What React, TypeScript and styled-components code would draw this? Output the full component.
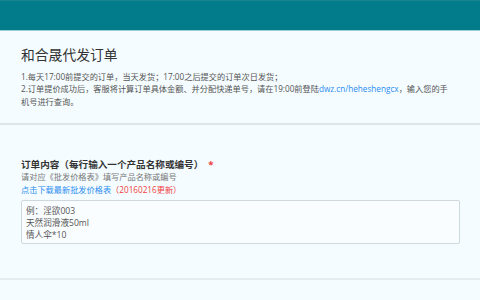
import styled, { createGlobalStyle } from "styled-components";

const GlobalStyle = createGlobalStyle`
  html, body {
    margin: 0;
    padding: 0;
    background: #f4fcff;
  }
  body {
    font-family: "Open Sans", "Noto Sans CJK SC", sans-serif;
    color: #555;
    text-spacing-trim: space-all;
  }
`;

export default function App() {
  return (
    <Page>
      <GlobalStyle />
      <TopBar />
      <Section>
        <Title>和合晟代发订单</Title>
        <Notes>
          <NoteLine>1.每天17:00前提交的订单，当天发货；17:00之后提交的订单次日发货；</NoteLine>
          <NoteLine>
            2.订单提价成功后，客服将计算订单具体金额、并分配快递单号，请在19:00前登陆
            <Link href="#">dwz.cn/heheshengcx</Link>，输入您的手
          </NoteLine>
          <NoteLine>机号进行查询。</NoteLine>
        </Notes>
      </Section>
      <Section $form>
        <Label>
          订单内容（每行输入一个产品名称或编号）<Required>*</Required>
        </Label>
        <Hint>请对应《批发价格表》填写产品名称或编号</Hint>
        <DownloadRow>
          <Link href="#">点击下载最新批发价格表</Link>
          <Updated>（20160216更新）</Updated>
        </DownloadRow>
        <OrderBox placeholder={"例：淫欲003\n天然润滑液50ml\n情人伞*10"} />
      </Section>
    </Page>
  );
}

const Page = styled.div`
  width: 480px;
  min-height: 300px;
  background: #f4fcff;
`;

const TopBar = styled.header`
  box-sizing: border-box;
  height: 31px;
  background: #027b8a;
  border-top: 1px solid #19858f;
  border-bottom: 1px solid #9ccdd3;
`;

const Section = styled.section<{ $form?: boolean }>`
  padding: ${(p) => (p.$form ? "34px 20px 34px 21px" : "14px 20px 15px 21px")};
  border-bottom: 2px solid ${(p) => (p.$form ? "#e4eded" : "#dfe6ea")};
`;

const Title = styled.h1`
  margin: 0 0 6px;
  font-size: 13.8px;
  line-height: 20px;
  font-weight: normal;
  color: #333;
`;

const Notes = styled.div`
  font-size: 8.2px;
  line-height: 12.3px;
  color: #555;
`;

const NoteLine = styled.div`
  white-space: nowrap;
`;

const Link = styled.a`
  color: #2d8cf0;
  text-decoration: none;
`;

const Label = styled.div`
  font-size: 9.6px;
  line-height: 12px;
  font-weight: bold;
  color: #333;
`;

const Required = styled.span`
  color: #ee3b3b;
  margin-left: 5px;
`;

const Hint = styled.div`
  font-size: 8.2px;
  line-height: 12.5px;
  color: #777;
`;

const DownloadRow = styled.div`
  font-size: 8.2px;
  line-height: 13px;
`;

const Updated = styled.span`
  color: #f03c3c;
`;

const OrderBox = styled.textarea`
  display: block;
  box-sizing: border-box;
  margin-top: 4px;
  width: 439px;
  height: 44px;
  padding: 4px 4px 2px;
  border: 1px solid #cfd8dd;
  border-radius: 2px;
  background: #fafdff;
  resize: none;
  font-family: "Open Sans", "Noto Sans CJK SC", sans-serif;
  font-size: 8.6px;
  line-height: 12px;
  color: #555;
  outline: none;
  text-spacing-trim: space-all;

  &::placeholder {
    color: #555;
  }
`;
